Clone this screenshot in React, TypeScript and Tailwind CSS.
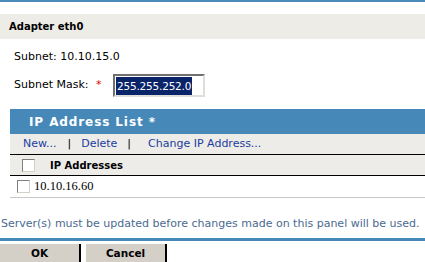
import React from "react";

function Check({ className = "" }: { className?: string }) {
  return (
    <span
      className={
        "inline-block w-[13px] h-[13px] bg-white border border-t-[#808080] border-l-[#808080] border-b-[#d4d0c8] border-r-[#d4d0c8] " +
        className
      }
    />
  );
}

export default function App() {
  return (
    <div className="w-[425px] h-[262px] bg-white overflow-hidden text-black font-['DejaVu_Sans',sans-serif]">
      <div className="h-[2px] bg-[#4a8ab9]" />
      <div className="h-[12px]" />
      <div className="h-[25px] bg-[#eeece7] pl-[9px] flex items-center font-bold text-[10px]">
        Adapter eth0
      </div>
      <div className="h-[14px] mt-[10px] pl-[14px] flex items-center text-[11px] leading-none">
        Subnet: 10.10.15.0
      </div>
      <div className="h-[23px] mt-[11px] flex items-center text-[11px]">
        <span className="pl-[14px] w-[113px] shrink-0">
          Subnet Mask: <span className="text-[#e00000] ml-[4px]">*</span>
        </span>
        <div className="w-[92px] h-[23px] bg-white border-2 border-t-[#707070] border-l-[#707070] border-b-[#e0ded8] border-r-[#e0ded8] flex items-center pl-[1px]">
          <span className="bg-[#0a246a] text-white text-[10.5px] tracking-[-0.2px] leading-[18px] h-[18px] px-[1px]">
            255.255.252.0
          </span>
        </div>
      </div>
      <div className="ml-[10px] mt-[12px]">
        <div className="h-[25px] bg-[#4689b9] text-white font-bold text-[12px] tracking-[0.9px] flex items-center pl-[19px]">
          IP Address List *
        </div>
        <div className="h-[21px] bg-[#eeece8] flex items-center text-[11px] text-[#1a3da0] border-b border-black">
          <span className="pl-[13px]">New...</span>
          <span className="text-black ml-[11px]">|</span>
          <span className="ml-[10px]">Delete</span>
          <span className="text-black ml-[10px]">|</span>
          <span className="ml-[17px]">Change IP Address...</span>
        </div>
        <div className="h-[21px] bg-[#eeece8] flex items-center border-b border-black">
          <Check className="ml-[12px]" />
          <span className="ml-[15px] font-bold text-[10px]">IP Addresses</span>
        </div>
        <div className="h-[22px] flex items-center border-b border-[#c8c8c8]">
          <Check className="ml-[7px]" />
          <span className="ml-[4px] text-[12.5px] font-['Liberation_Serif',serif]">10.10.16.60</span>
        </div>
      </div>
      <div className="mt-[19px] h-[14px] text-[11px] text-[#4a6a90] pl-[1px] flex items-center whitespace-nowrap">
        Server(s) must be updated before changes made on this panel will be used.
      </div>
      <div className="mt-[7px] h-[3px] bg-[#4689b9]" />
      <div className="mt-[3px] flex gap-[5px]">
        <div className="w-[81px] h-[20px] bg-[#d4d0c8] border-r-2 border-black flex items-center justify-center font-bold text-[10.5px]">
          OK
        </div>
        <div className="w-[81px] h-[20px] bg-[#d4d0c8] border-r-2 border-black flex items-center justify-center font-bold text-[10.5px]">
          Cancel
        </div>
      </div>
    </div>
  );
}
